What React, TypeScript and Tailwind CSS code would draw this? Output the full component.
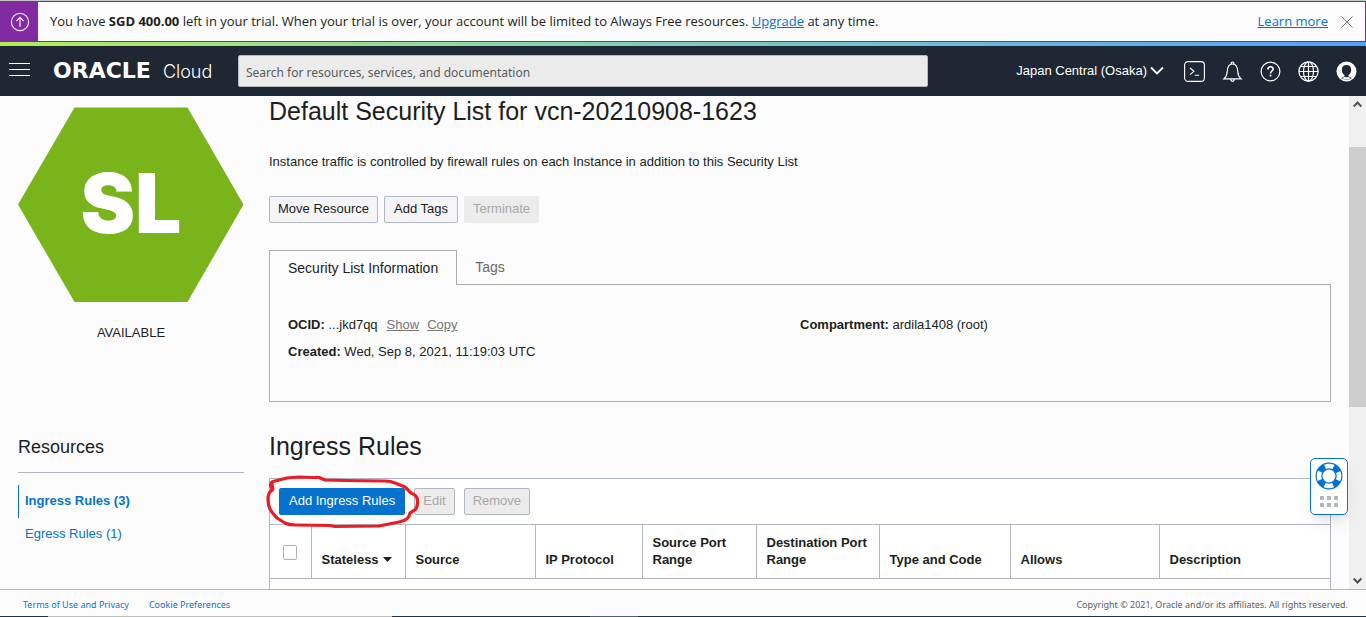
import React from "react";

const columns = [
  { label: "Source", width: "w-[130px]" },
  { label: "IP Protocol", width: "w-[107px]" },
  { label: "Source Port Range", width: "w-[114px]" },
  { label: "Destination Port Range", width: "w-[123px]" },
  { label: "Type and Code", width: "w-[131px]" },
  { label: "Allows", width: "w-[149px]" },
  { label: "Description", width: "" },
];

function TrialBanner() {
  return (
    <div className="flex h-[41px] shrink-0 items-center border border-[#7b2d9e] bg-[#fcfcfc] font-['Open_Sans',sans-serif] text-[13px] text-[#201e1c]">
      <div className="flex w-[37px] items-center justify-center self-stretch bg-[#822aa2]">
        <svg width="20" height="20" viewBox="0 0 20 20" fill="none" stroke="#f3e4f8" strokeWidth="1.2">
          <circle cx="10" cy="10" r="8.6" />
          <path d="M10 15V5.6M6.4 9.2L10 5.4l3.6 3.8" />
        </svg>
      </div>
      <p className="flex-1 pl-3">
        You have <b>SGD 400.00</b> left in your trial. When your trial is over, your account will be limited to Always
        Free resources.{" "}
        <a href="#upgrade" className="text-[#0572ce] underline">
          Upgrade
        </a>{" "}
        at any time.
      </p>
      <a href="#learn" className="text-[#0572ce] underline">
        Learn more
      </a>
      <button aria-label="Dismiss" className="mr-[11px] ml-3">
        <svg width="14" height="14" viewBox="0 0 14 14" stroke="#7a7672" strokeWidth="1">
          <path d="M1.5 1.5l11 11M12.500 1.500l-11 11" />
        </svg>
      </button>
    </div>
  );
}

function HeaderIcons() {
  return (
    <div className="flex items-center gap-[17px]">
      <button aria-label="Cloud Shell">
        <svg width="21" height="21" viewBox="0 0 21 21" fill="none" stroke="#fff" strokeWidth="1.1">
          <rect x="0.6" y="0.6" width="19.8" height="19.8" rx="3.5" />
          <path d="M6 7l4 3.300-4 3.300M10.800 14.200h4.400" />
        </svg>
      </button>
      <button aria-label="Announcements">
        <svg width="21" height="21" viewBox="0 0 21 21" fill="none" stroke="#fff" strokeWidth="1.2">
          <path d="M2 17.800c2.200-1.800 3-3.600 3.200-7 .2-4.600 1.700-7.800 5.300-7.800s5.100 3.200 5.300 7.800c.2 3.400 1 5.200 3.200 7z" />
          <path d="M9.200 3c-.4-2.700 3-2.700 2.600 0M8.700 18c.2 3 3.400 3 3.600 0" />
        </svg>
      </button>
      <button aria-label="Help">
        <svg width="21" height="21" viewBox="0 0 21 21" fill="none" stroke="#fff" strokeWidth="1.2">
          <circle cx="10.500" cy="10.500" r="9.400" />
          <path strokeWidth="1.600" d="M7.900 8.400c0-3.700 5.400-3.500 5.200-.2-.1 1.800-2.600 1.900-2.600 4.200M10.500 13.800v1.700" />
        </svg>
      </button>
      <button aria-label="Language">
        <svg width="21" height="21" viewBox="0 0 21 21" fill="none" stroke="#fff" strokeWidth="1.200">
          <circle cx="10.500" cy="10.500" r="9.600" />
          <ellipse cx="10.500" cy="10.500" rx="5" ry="9.600" />
          <path d="M10.500 1v19M1 10.500h19M2.500 5.500h16M2.500 15.500h16" />
        </svg>
      </button>
      <button aria-label="Profile">
        <svg width="21" height="21" viewBox="0 0 21 21">
          <circle cx="10.500" cy="10.500" r="10" fill="#fff" />
          <path
            fill="#1e2733"
            d="M10.500 4c-3 0-4.700 2-4.700 4.800 0 2.400 1.100 4.300 2.700 5.300v1.500c-1.500.4-2.600.9-3.500 1.600 3.400 1.800 7.600 1.800 11 0-.9-.7-2-1.200-3.500-1.600v-1.500c1.600-1 2.700-2.900 2.700-5.300 0-2.800-1.700-4.800-4.700-4.800z"
          />
          <path fill="#fff" d="M6 17.200c1-.8 2-1 2.900-1.300 1 .5 2.200.5 3.200 0 .9.300 1.900.5 2.900 1.300-2.600 1.400-6.400 1.400-9 0z" />
        </svg>
      </button>
    </div>
  );
}

function Header() {
  return (
    <header className="flex h-[50px] shrink-0 items-center bg-[#1e2733] pr-[9px] pl-[9px] text-white">
      <button aria-label="Navigation menu" className="flex w-[21px] flex-col gap-[5px] pb-[3px]">
        <span className="h-px w-full bg-white" />
        <span className="h-px w-full bg-white" />
        <span className="h-px w-full bg-white" />
      </button>
      <a href="#home" className="ml-[23px] flex w-[185px] shrink-0 items-baseline gap-3 pt-px leading-6">
        <span className="font-['DejaVu_Sans',sans-serif] text-[22px] font-bold">ORACLE</span>
        <span className="font-[Inter,sans-serif] text-[18px] font-light">Cloud</span>
      </a>
      <input
        type="search"
        aria-label="Search"
        placeholder="Search for resources, services, and documentation"
        className="h-8 max-w-[690px] min-w-0 flex-1 rounded-xs border border-[#b4b9c2] bg-[#ebebeb] px-[7px] pt-[3px] font-['Noto_Sans',sans-serif] text-[12px] text-[#201e1c] placeholder:text-[#5a5a5a]"
      />
      <div className="ml-auto flex items-center gap-5">
        <button className="flex items-center gap-[3px] text-[13px]">
          Japan Central (Osaka)
          <svg width="14" height="10" viewBox="0 0 14 10" fill="none" stroke="#fff" strokeWidth="1.800">
            <path d="M1 1.500l6 6 6-6" />
          </svg>
        </button>
        <HeaderIcons />
      </div>
    </header>
  );
}

function Sidebar() {
  return (
    <aside className="w-[226px] shrink-0 pt-[11px]">
      <svg width="226" height="195" viewBox="0 0 226 195" className="block">
        <path fill="#78b41a" d="M56.500 .5h113L225.500 97.500 169.500 195h-113L0 97.500z" />
        <text
          x="113"
          y="126"
          textAnchor="middle"
          fill="#fff"
          className="font-[Inter,sans-serif] text-[82px] font-black"
        >
          SL
        </text>
      </svg>
      <p className="mt-[21px] text-center leading-5">AVAILABLE</p>
      <h2 className="mt-[92px] border-b border-[#b1b7c1] pb-[13px] text-[18px] leading-6">Resources</h2>
      <nav className="mt-3 text-[#0572ce]">
        <a href="#ingress" className="block border-l border-[#0572ce] pb-px pl-[6px] leading-8 font-bold">
          Ingress Rules (3)
        </a>
        <a href="#egress" className="block pl-[7px] leading-8">
          Egress Rules (1)
        </a>
      </nav>
    </aside>
  );
}

function InfoTabs() {
  return (
    <section className="mt-[27px]">
      <div role="tablist" className="flex text-[14px]">
        <button
          role="tab"
          aria-selected="true"
          className="relative -mb-px h-[35px] border border-b-0 border-[#acacac] bg-[#fcfcfc] px-[18px]"
        >
          Security List Information
        </button>
        <button role="tab" aria-selected="false" className="h-[34px] px-[18px] text-[#6b6b6b]">
          Tags
        </button>
      </div>
      <div className="grid h-[118px] grid-cols-2 border border-[#acacac] px-[18px] pt-[26px] leading-[27px]">
        <div>
          <p>
            <b>OCID:</b> ...jkd7qq
            <a href="#show" className="ml-[9px] text-[#757575] underline">
              Show
            </a>
            <a href="#copy" className="ml-2 text-[#757575] underline">
              Copy
            </a>
          </p>
          <p>
            <b>Created:</b> Wed, Sep 8, 2021, 11:19:03 UTC
          </p>
        </div>
        <p>
          <b>Compartment:</b> ardila1408 (root)
        </p>
      </div>
    </section>
  );
}

function IngressRules() {
  return (
    <section className="mt-7">
      <h2 className="text-[25px] leading-8">Ingress Rules</h2>
      <div className="relative mt-4 border border-[#b1b7c1] bg-white">
        <div className="flex h-[45px] items-center gap-[9px] px-[9px]">
          <button className="h-[27px] rounded-xs bg-[#0572ce] px-[10px] pb-px text-white">Add Ingress Rules</button>
          <button disabled className="h-[27px] rounded-xs border border-[#b1b7c1] bg-[#ececec] px-[8px] pb-px text-[#a8a8a8]">
            Edit
          </button>
          <button disabled className="h-[27px] rounded-xs border border-[#b1b7c1] bg-[#ececec] px-[8px] pb-px text-[#a8a8a8]">
            Remove
          </button>
        </div>
        <table className="w-full table-fixed border-collapse text-left">
          <thead>
            <tr className="h-[53px] border-y border-[#b1b7c1]">
              <th className="w-[41px] border-r border-[#b1b7c1] text-center">
                <input
                  type="checkbox"
                  aria-label="Select all rules"
                  className="h-[15px] w-[14px] appearance-none rounded-xs border border-[#aab0ba] bg-white align-middle"
                />
              </th>
              <th className="w-[94px] border-r border-[#b1b7c1] px-[10px] pb-[10px] align-bottom leading-[17px] whitespace-nowrap">
                Stateless
                <svg width="9" height="5" viewBox="0 0 9 5" className="mb-[2px] ml-1 inline-block" fill="#201e1c">
                  <path d="M0 0h9L4.500 5z" />
                </svg>
              </th>
              {columns.map((c) => (
                <th
                  key={c.label}
                  className={`${c.width} border-r border-[#b1b7c1] pt-[9px] pr-2 pb-[10px] pl-[10px] align-bottom leading-[17px] last:border-r-0`}
                >
                  {c.label}
                </th>
              ))}
            </tr>
          </thead>
          <tbody>
            <tr className="h-10">
              <td colSpan={9} />
            </tr>
          </tbody>
        </table>
        <svg
          width="160"
          height="60"
          viewBox="0 0 160 60"
          className="pointer-events-none absolute -top-2 -left-1 overflow-visible"
          fill="none"
          stroke="#ed1c24"
          strokeWidth="3.200"
          strokeLinecap="round"
          strokeLinejoin="round"
        >
          <path d="M5.500 17L4.500 14Q5 11 7 10.500L13 9 21 7 33 6 46 6.500 53 6.500 59 9 79 9.500 119 10Q125 10 129 12L139 16 145 22Q151 24 151.500 29T150 38L144 42Q143 47 139 49T128 52L113 55 69 55.500 64 54.500 29 54Q23 54 19 52L11 47Q6 42 4 38T2 29Q2 23 4 21L7 18 6 13" />
        </svg>
      </div>
    </section>
  );
}

function HelpWidget() {
  return (
    <button
      aria-label="Support"
      className="absolute right-[18px] bottom-[74px] flex h-[57px] w-[38px] flex-col items-center justify-between rounded-[5px] border border-[#0572ce] bg-white pt-[3px] pb-[6px] shadow-lg"
    >
      <svg width="28" height="28" viewBox="0 0 28 28" fill="none">
        <circle cx="14" cy="14" r="10" stroke="#0572ce" strokeWidth="7" />
        <circle cx="14" cy="14" r="10" stroke="#fff" strokeWidth="4.600" strokeDasharray="8.700 7.008" strokeDashoffset="4.350" />
      </svg>
      <svg width="18" height="12" viewBox="0 0 18 12" fill="#b1b7c1">
        <path d="M0 0h4v4H0zM7 0h4v4H7zM14 0h4v4h-4zM0 7h4v4H0zM7 7h4v4H7zM14 7h4v4h-4z" />
      </svg>
    </button>
  );
}

function ScrollTrack() {
  return (
    <div className="flex w-[17px] shrink-0 flex-col items-center bg-[#f0f0f0]" aria-hidden="true">
      <svg width="9" height="51" viewBox="0 0 9 51" fill="none" stroke="#505050" strokeWidth="2">
        <path d="M.7 10.500l3.800-4 3.800 4" />
      </svg>
      <div className="h-[260px] w-full bg-[#cdcdcd]" />
      <svg width="9" height="16" viewBox="0 0 9 16" fill="none" stroke="#505050" strokeWidth="2" className="mt-auto">
        <path d="M.7 5.500l3.800 4 3.800-4" />
      </svg>
    </div>
  );
}

export default function App() {
  return (
    <div className="flex h-screen flex-col bg-[#fcfcfc] font-['Liberation_Sans',Arial,sans-serif] text-[13px] text-[#201e1c]">
      <div className="h-px shrink-0 bg-[#c8c8c8]" />
      <TrialBanner />
      <div className="h-1 shrink-0 bg-linear-to-r from-[#b4ec51] to-[#529fff]" />
      <Header />
      <div className="relative flex min-h-0 flex-1">
        <div className="flex min-w-0 flex-1 gap-[25px] overflow-hidden px-[18px]">
          <Sidebar />
          <main className="min-w-0 flex-1">
            <h1 className="text-[25px] leading-[30px]">Default Security List for vcn-20210908-1623</h1>
            <p className="mt-[26px] leading-5">
              Instance traffic is controlled by firewall rules on each Instance in addition to this Security List
            </p>
            <div className="mt-6 flex gap-[6px]">
              <button className="h-[27px] rounded-xs border border-[#b1b7c1] bg-[#f5f5f7] px-[8px] pb-px">Move Resource</button>
              <button className="h-[27px] rounded-xs border border-[#b1b7c1] bg-[#f5f5f7] px-[9px] pb-px">Add Tags</button>
              <button disabled className="h-[27px] rounded-xs bg-[#ececec] px-[9px] pb-px text-[#a8a8a8]">
                Terminate
              </button>
            </div>
            <InfoTabs />
            <IngressRules />
          </main>
        </div>
        <ScrollTrack />
        <HelpWidget />
      </div>
      <footer className="flex h-[27px] shrink-0 items-center gap-5 border-t border-[#b1b7c1] pt-[3px] pr-[18px] pl-[23px] font-['Noto_Sans',sans-serif] text-[9px]">
        <a href="#terms" className="text-[#0572ce]">
          Terms of Use and Privacy
        </a>
        <a href="#cookies" className="text-[#0572ce]">
          Cookie Preferences
        </a>
        <p className="ml-auto text-[#5c5c5c]">Copyright © 2021, Oracle and/or its affiliates. All rights reserved.</p>
      </footer>
      <div className="flex h-px shrink-0 bg-[#1d3445]">
        <div className="ml-12 w-[344px] bg-[#bdbdbd]" />
        <div className="ml-[198px] w-12 bg-[#4d6370]" />
      </div>
    </div>
  );
}
